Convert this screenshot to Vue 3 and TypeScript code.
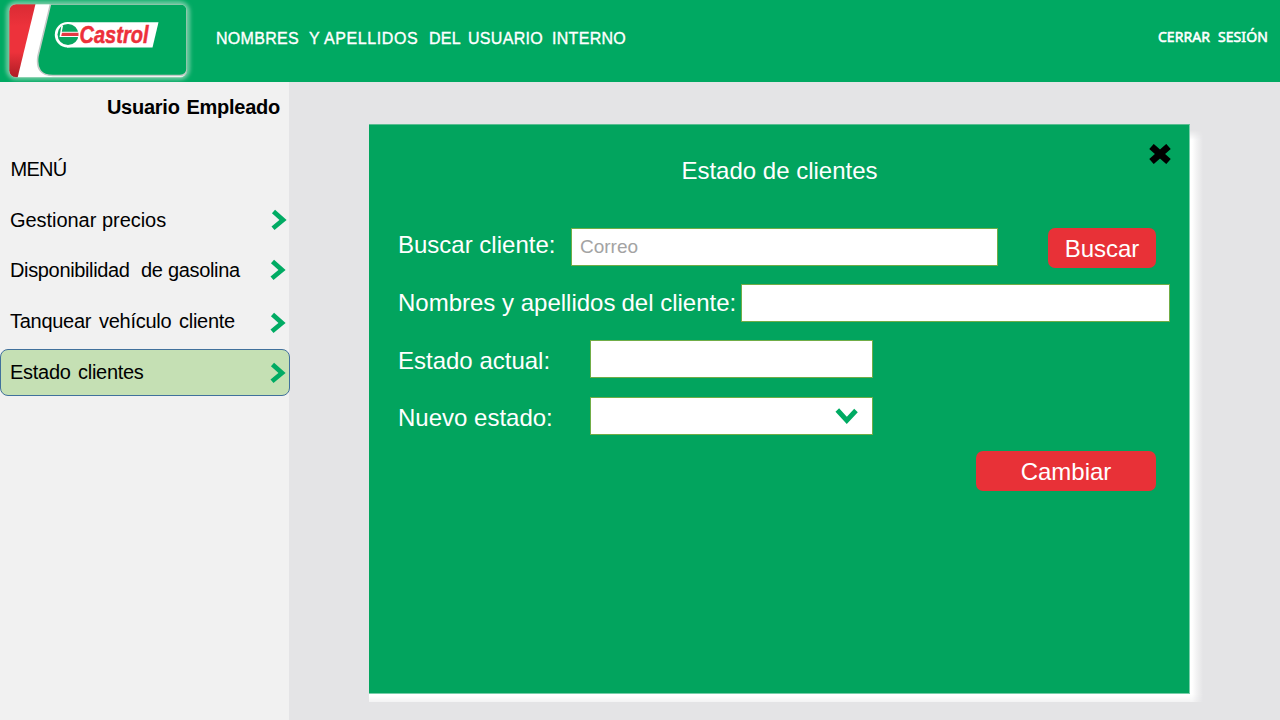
<script setup lang="ts">
interface Word {
  text: string
  width: number
}

interface MenuItem {
  id: string
  words: Word[]
  arrowX: number
  arrowY: number
}

const userName: Word[] = [
  { text: 'NOMBRES', width: 93 },
  { text: 'Y', width: 15 },
  { text: 'APELLIDOS', width: 105 },
  { text: 'DEL', width: 39 },
  { text: 'USUARIO', width: 84 },
  { text: 'INTERNO', width: 76 },
]

const activeItem = 'estado'

const menu: MenuItem[] = [
  { id: 'precios', words: [{ text: 'Gestionar', width: 92 }, { text: 'precios', width: 70 }], arrowX: 270.5, arrowY: 11 },
  { id: 'gasolina', words: [{ text: 'Disponibilidad', width: 131 }, { text: 'de', width: 27 }, { text: 'gasolina', width: 80 }], arrowX: 269.5, arrowY: 11 },
  { id: 'tanquear', words: [{ text: 'Tanquear', width: 89 }, { text: 'vehículo', width: 80 }, { text: 'cliente', width: 60 }], arrowX: 269.5, arrowY: 13 },
  { id: 'estado', words: [{ text: 'Estado', width: 68 }, { text: 'clientes', width: 72 }], arrowX: 269.5, arrowY: 12 },
]
</script>

<template>
  <div class="screen">
    <header class="topbar">
      <svg class="logo" width="200" height="82" viewBox="0 0 200 82">
        <defs>
          <filter id="glow" x="-10%" y="-20%" width="120%" height="140%">
            <feGaussianBlur stdDeviation="2" />
          </filter>
          <linearGradient id="red" x1="0" y1="0" x2="0" y2="1">
            <stop offset="0" stop-color="#d92b34" />
            <stop offset="0.3" stop-color="#ed323b" />
            <stop offset="0.65" stop-color="#ed323b" />
            <stop offset="1" stop-color="#ad1c24" />
          </linearGradient>
          <clipPath id="card"><rect x="9" y="4" width="178" height="73.500" rx="7" /></clipPath>
        </defs>
        <rect x="8.500" y="3.500" width="179" height="74" rx="8" fill="none" stroke="#9fdabf" stroke-width="3.500" filter="url(#glow)" />
        <g clip-path="url(#card)">
          <rect x="9" y="4" width="178" height="74" fill="#fff" />
          <path d="M9 4H35.500L17.500 78H9Z" fill="url(#red)" />
          <path d="M50.500 4L38 56Q35 75.500 53 75.500H180Q187 75 187 69V4Z" fill="#00a75f" stroke="#c3cac6" stroke-width="1.600" />
        </g>
        <rect x="9" y="4" width="178" height="73.500" rx="7" fill="none" stroke="#7ccba5" stroke-width=".7" />
        <path d="M67 22.200H158.500L152.500 47.500H67Z" fill="#fff" />
        <circle cx="67.500" cy="34.800" r="12.700" fill="#fff" />
        <circle cx="68" cy="34.500" r="10.500" fill="#08a660" />
        <path d="M61.300 26L59.500 37H79.500V31.800H61.800L63 26Z" fill="#fff" />
        <path d="M62 32.800H78.500V36H61.200Z" fill="#e43a42" />
        <text x="79.500" y="43.300" textLength="69" lengthAdjust="spacingAndGlyphs" class="brand">Castrol</text>
      </svg>
      <div class="username">
        <span v-for="w in userName" :key="w.text" class="word" :class="{ wide: w.text === 'APELLIDOS' }" :style="{ width: w.width + 'px' }">{{ w.text }}</span>
      </div>
      <a class="logout">CERRAR SESIÓN</a>
    </header>

    <div class="body">
      <aside class="sidebar">
        <div class="role">Usuario Empleado</div>
        <div class="menu-title">MENÚ</div>
        <nav>
          <a v-for="item in menu" :key="item.id" class="item" :class="[item.id, { active: item.id === activeItem }]">
            <span v-for="w in item.words" :key="w.text" class="word" :style="{ width: w.width + 'px' }">{{ w.text }}</span>
            <svg class="arrow" :style="{ left: item.arrowX + 'px', top: item.arrowY + 'px' }" width="16" height="22" viewBox="0 0 16 22">
              <path d="M2.500 2.500L12 11L2 19.300" fill="none" stroke="#00ab63" stroke-width="4.700" />
            </svg>
          </a>
        </nav>
      </aside>

      <main class="content">
        <section class="panel">
          <svg class="close" width="22" height="20" viewBox="0 0 22 20">
            <path d="M2.500 2.500L19.500 17.500M19.500 2.500L2.500 17.500" stroke="#000" stroke-width="6.800" />
          </svg>
          <h1>Estado de clientes</h1>
          <form @submit.prevent>
            <div class="row">
              <label class="l1">Buscar cliente:</label>
              <div class="field w1"><span>Correo</span></div>
              <button class="btn find">Buscar</button>
            </div>
            <div class="row">
              <label class="l2">Nombres y apellidos<i></i>del cliente:</label>
              <div class="field w2"></div>
            </div>
            <div class="row status">
              <label class="l3">Estado actual:</label>
              <div class="field w3"></div>
            </div>
            <div class="row">
              <label class="l3">Nuevo estado:</label>
              <div class="field w3 select">
                <svg width="24" height="18" viewBox="0 0 24 18">
                  <path d="M2.300 3L11.800 13.400L21 3.500" fill="none" stroke="#00ab63" stroke-width="4.900" />
                </svg>
              </div>
            </div>
            <button class="btn change">Cambiar</button>
          </form>
        </section>
      </main>
    </div>
  </div>
</template>

<style>
body {
  margin: 0;
}
</style>

<style scoped>
.screen {
  width: 1280px;
  height: 720px;
  overflow: hidden;
  display: flex;
  flex-direction: column;
  font-family: "Liberation Sans", Arial, sans-serif;
  color: #000;
}
.topbar {
  height: 82px;
  flex: none;
  display: flex;
  background: #00a962;
  color: #fff;
}
.logo {
  flex: none;
}
.brand {
  font: italic bold 24px "Liberation Sans", Arial, sans-serif;
  fill: #ed303a;
  stroke: #ed303a;
  stroke-width: 0.5px;
}
.word {
  display: inline-block;
  white-space: nowrap;
  flex: none;
}
.username {
  display: flex;
  margin: 29px 0 0 16px;
  font-size: 16px;
  line-height: 20px;
  letter-spacing: 0.3px;
  -webkit-text-stroke: 0.35px #fff;
}
.word.wide {
  letter-spacing: 0.6px;
}
.logout {
  margin: 27px 12px 0 auto;
  font: 14px/20px "Noto Sans", sans-serif;
  letter-spacing: 0.1px;
  word-spacing: 4px;
  white-space: nowrap;
  -webkit-text-stroke: 0.55px #fff;
}
.body {
  flex: 1;
  display: flex;
  background: #e4e4e6;
}
.sidebar {
  width: 289px;
  flex: none;
  background: #f1f1f1;
  font-size: 20px;
}
.role {
  margin-top: 11px;
  padding-right: 9px;
  text-align: right;
  font-weight: bold;
  line-height: 28px;
  letter-spacing: -0.25px;
  word-spacing: 1.500px;
}
.menu-title {
  margin: 34px 0 0 10.500px;
  line-height: 28px;
  letter-spacing: -0.7px;
}
nav {
  padding-top: 14px;
}
.item {
  position: relative;
  display: flex;
  align-items: center;
  box-sizing: border-box;
  width: 290px;
  height: 47px;
  margin-bottom: 4px;
  padding-left: 10px;
  border: 1px solid transparent;
  border-left-width: 0;
  letter-spacing: -0.28px;
}
.item.precios {
  margin-bottom: 3px;
  letter-spacing: -0.05px;
}
.item.gasolina {
  letter-spacing: -0.35px;
}
.item.active {
  background: #c5e0b4;
  border: 1px solid #41719c;
  border-radius: 8px;
  padding-left: 9px;
}
.item.active .arrow {
  margin-left: -1px;
}
.arrow {
  position: absolute;
}
.content {
  padding: 42px 0 0 80px;
}
.panel {
  position: relative;
  box-sizing: border-box;
  width: 821px;
  height: 570px;
  padding: 32px 20px 0 29px;
  background: #02a45e;
  border-top: 1px solid #59bd91;
  border-right: 1px solid #78ceaa;
  border-bottom: 1px solid #78ceaa;
  color: #fff;
}
.panel::before {
  content: "";
  position: absolute;
  left: 100%;
  top: 5px;
  width: 13px;
  bottom: -9px;
  margin-left: 1px;
  background: linear-gradient(90deg, #fff 15%, #f1f1f2 55%, #e4e4e6);
  -webkit-mask-image: linear-gradient(transparent, #000 10px, #000 calc(100% - 8px), rgba(0, 0, 0, 0.6));
  mask-image: linear-gradient(transparent, #000 10px, #000 calc(100% - 8px), rgba(0, 0, 0, 0.6));
}
.panel::after {
  content: "";
  position: absolute;
  left: 0;
  right: -1px;
  top: 100%;
  height: 8px;
  margin-top: 1px;
  background: linear-gradient(#fff 25%, #f3f3f4);
}
.close {
  position: absolute;
  left: 779.500px;
  top: 19px;
}
h1 {
  margin: 0;
  padding-right: 8px;
  text-align: center;
  font-weight: normal;
  font-size: 24px;
  line-height: 28px;
}
form {
  margin-top: 43px;
  font-size: 24px;
}
.row {
  display: flex;
  height: 38px;
  margin-bottom: 18px;
}
.row.status {
  margin-bottom: 19px;
}
label {
  flex: none;
  white-space: nowrap;
  line-height: 34px;
}
.l1 {
  width: 173px;
}
.l2 {
  width: 343px;
  padding-top: 2px;
}
.l2 i {
  display: inline-block;
  width: 6px;
}
.l3 {
  width: 192px;
  padding-top: 4px;
}
.field {
  box-sizing: border-box;
  height: 38px;
  background: #fff;
  border: 1px solid #70ad47;
  color: #a3a3a3;
  font-size: 19px;
  line-height: 36px;
  padding-left: 8px;
  flex: none;
}
.w1 {
  width: 427px;
}
.w2 {
  width: 429px;
}
.w3 {
  width: 283px;
}
.select {
  display: flex;
  justify-content: flex-end;
  padding: 9px 13px 0 0;
}
.btn {
  height: 40px;
  flex: none;
  padding: 1px 0 0;
  border: 0;
  border-radius: 7px;
  background: #e83137;
  color: #fff;
  font: 24px/40px "Liberation Sans", Arial, sans-serif;
}
.find {
  width: 108px;
  margin-left: 50px;
}
.change {
  display: block;
  width: 180px;
  margin: -2px 0 0 578px;
}
</style>
